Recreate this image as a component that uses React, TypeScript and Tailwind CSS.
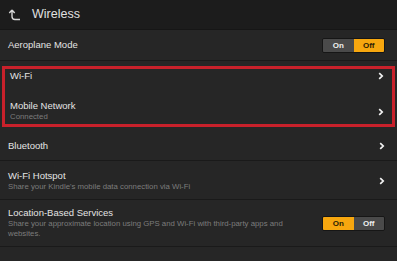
import React from 'react';

const Chevron: React.FC = () => (
  <svg width="6" height="8" viewBox="0 0 6 8" className="shrink-0">
    <path d="M1.2 1.2 L4.2 4 L1.2 6.8" fill="none" stroke="#f2f2f2" strokeWidth="1.7" />
  </svg>
);

const Toggle: React.FC<{ on: boolean }> = ({ on }) => (
  <div className="flex h-[15px] w-[63px] shrink-0 overflow-hidden rounded-[2px] border border-[#161616] text-[8px] font-bold leading-[13px]">
    <div
      className={`flex w-1/2 items-center justify-center ${
        on ? 'bg-[#f7a70f] text-[#2a1d05]' : 'bg-[#4a4a4a] text-[#f0f0f0]'
      }`}
    >
      On
    </div>
    <div
      className={`flex w-1/2 items-center justify-center ${
        on ? 'bg-[#4a4a4a] text-[#f0f0f0]' : 'bg-[#f7a70f] text-[#2a1d05]'
      }`}
    >
      Off
    </div>
  </div>
);

export default function App() {
  return (
    <div
      className="h-[261px] w-[397px] overflow-hidden bg-[#262626] text-[#e4e4e4]"
      style={{ fontFamily: '"Liberation Sans", Arial, sans-serif' }}
    >
      {/* header */}
      <div className="flex h-[30px] items-center border-b border-[#161616] bg-[#1c1c1c] pl-[8px]">
        <svg width="14" height="14" viewBox="0 0 14 14" className="mr-[10px]">
          <path
            d="M4 2 L1.3 5 M4 2 L6.7 5 M4 2.5 V8.5 Q4 11.5 7 11.5 H12"
            fill="none"
            stroke="#d8d8d8"
            strokeWidth="1.4"
          />
        </svg>
        <span className="text-[12.5px] text-[#e0e0e0]">Wireless</span>
      </div>

      {/* aeroplane */}
      <div className="flex h-[31px] items-center justify-between border-b border-[#1a1a1a] pl-[8px] pr-[12px]">
        <span className="text-[9.5px]">Aeroplane Mode</span>
        <Toggle on={false} />
      </div>

      {/* highlighted group */}
      <div className="mx-[2px] mt-[5px] h-[61px] border-[3px] border-[#c8212b]">
        <div className="flex h-[26px] items-start justify-between pl-[5px] pr-[8px]">
          <span className="text-[9.5px] leading-[13px]">Wi-Fi</span>
          <div className="pt-[3px]">
            <Chevron />
          </div>
        </div>
        <div className="flex h-[29px] items-start justify-between pl-[5px] pr-[8px] pt-[4px]">
          <div className="flex flex-col">
            <span className="text-[9.5px] leading-[13px]">Mobile Network</span>
            <span className="text-[7.8px] leading-[10px] text-[#7c7c7c]">Connected</span>
          </div>
          <div className="pt-[9px]">
            <Chevron />
          </div>
        </div>
      </div>

      {/* bluetooth */}
      <div className="flex h-[34px] items-center justify-between border-b border-[#1a1a1a] pl-[8px] pr-[12px] pt-[4px]">
        <span className="text-[9.5px] leading-[13px]">Bluetooth</span>
        <Chevron />
      </div>

      {/* hotspot */}
      <div className="flex h-[39px] items-start justify-between border-b border-[#1a1a1a] pl-[8px] pr-[12px] pt-[8px]">
        <div className="flex flex-col">
          <span className="text-[9.5px] leading-[13px]">Wi-Fi Hotspot</span>
          <span className="text-[7.8px] leading-[10px] text-[#7c7c7c]">
            Share your Kindle&apos;s mobile data connection via Wi-Fi
          </span>
        </div>
        <div className="pt-[8px]">
          <Chevron />
        </div>
      </div>

      {/* location */}
      <div className="flex h-[47px] items-start justify-between border-b border-[#1a1a1a] pl-[8px] pr-[12px] pt-[6px]">
        <div className="flex w-[286px] flex-col">
          <span className="text-[9.5px] leading-[13px]">Location-Based Services</span>
          <span className="text-[7.8px] leading-[10px] text-[#7c7c7c]">
            Share your approximate location using GPS and Wi-Fi with third-party apps and websites.
          </span>
        </div>
        <div className="pt-[10px]">
          <Toggle on={true} />
        </div>
      </div>
    </div>
  );
}
